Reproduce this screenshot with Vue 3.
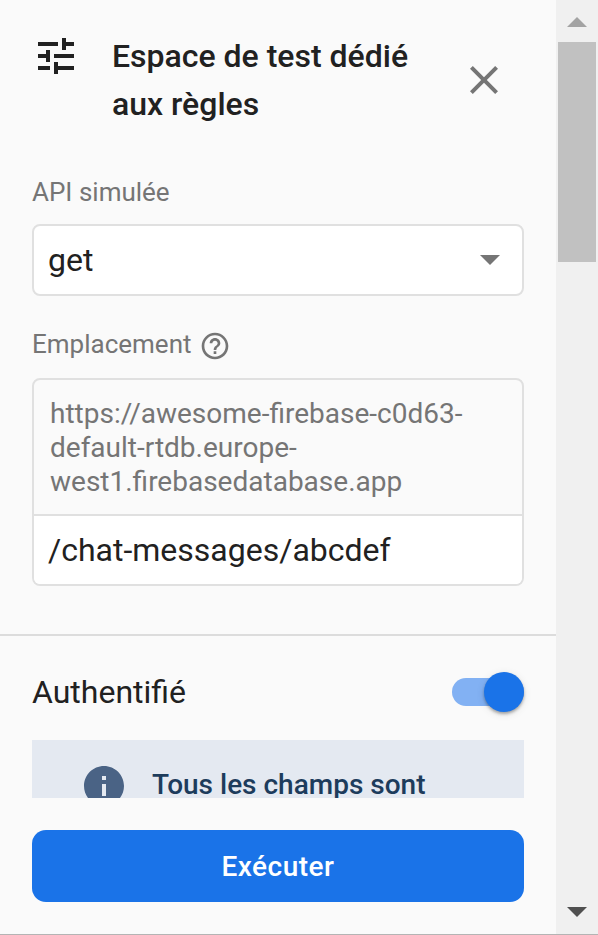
<script setup>
import { ref } from 'vue'

const method = ref('get')
const path = ref('/chat-messages/abcdef')
const authenticated = ref(true)
const databaseUrl = ['https://awesome-firebase-c0d63-', 'default-rtdb.europe-', 'west1.firebasedatabase.app']
</script>

<template>
  <div class="window">
    <main class="panel">
      <div class="content">
        <header class="header">
          <svg class="icon tune" viewBox="0 0 24 24"><path d="M3 17v2h6v-2H3zM3 5v2h10V5H3zm10 16v-2h8v-2h-8v-2h-2v6h2zM7 9v2H3v2h4v2h2V9H7zm14 4v-2H11v2h10zm-6-4h2V7h4V5h-4V3h-2v6z" /></svg>
          <h1 class="title">Espace de test dédié aux règles</h1>
          <button class="close" type="button" aria-label="Fermer">
            <svg class="icon" viewBox="0 0 24 24"><path d="M19 6.41 17.59 5 12 10.59 6.41 5 5 6.41 10.59 12 5 17.59 6.41 19 12 13.41 17.59 19 19 17.59 13.41 12z" /></svg>
          </button>
        </header>

        <div class="label"><span>API simulée</span></div>
        <div class="select">
          <span class="value">{{ method }}</span>
          <svg class="icon arrow" viewBox="0 0 24 24"><path d="M7 10l5 5 5-5z" /></svg>
        </div>

        <div class="label location">
          <span>Emplacement</span>
          <svg class="help" viewBox="0 0 24 24"><path d="M11 18h2v-2h-2v2zm1-16C6.48 2 2 6.48 2 12s4.48 10 10 10 10-4.48 10-10S17.52 2 12 2zm0 18c-4.41 0-8-3.59-8-8s3.59-8 8-8 8 3.59 8 8-3.59 8-8 8zm0-14c-2.21 0-4 1.79-4 4h2c0-1.1.9-2 2-2s2 .9 2 2c0 2-3 1.75-3 5h2c0-2.25 3-2.5 3-5 0-2.21-1.79-4-4-4z" /></svg>
        </div>
        <div class="field">
          <div class="prefix"><div v-for="line in databaseUrl" :key="line">{{ line }}</div></div>
          <div class="path">{{ path }}</div>
        </div>
      </div>

      <div class="auth">
        <div class="auth-row">
          <span class="auth-label">Authentifié</span>
          <button class="toggle" :class="{ on: authenticated }" type="button" @click="authenticated = !authenticated"><span class="thumb"></span></button>
        </div>
        <div class="notice">
          <svg class="icon info" viewBox="0 0 24 24"><path d="M12 2C6.48 2 2 6.48 2 12s4.48 10 10 10 10-4.48 10-10S17.52 2 12 2zm1 15h-2v-6h2v6zm0-8h-2V7h2v2z" /></svg>
          <span class="notice-text">Tous les champs sont</span>
        </div>
      </div>

      <button class="run" type="button">Exécuter</button>
    </main>

    <aside class="scrollbar">
      <svg class="caret up" viewBox="0 0 20 10"><path d="M0 10 10 0l10 10z" /></svg>
      <div class="scroll-thumb"></div>
      <svg class="caret down" viewBox="0 0 20 10"><path d="M0 0h20L10 10z" /></svg>
    </aside>
  </div>
</template>

<style>
body {
  margin: 0;
  background: #fafafa;
}
</style>

<style scoped>
.window {
  box-sizing: border-box;
  display: flex;
  width: 598px;
  height: 935px;
  overflow: hidden;
  border-bottom: 1px solid #b4b4b4;
  background: #fafafa;
  color: #212121;
  font-family: Roboto, sans-serif;
}
button {
  padding: 0;
  border: 0;
  background: none;
  font: inherit;
}
.panel {
  display: flex;
  flex-direction: column;
  width: 556px;
}
.content {
  box-sizing: border-box;
  height: 636px;
  padding: 32px 32px 0;
  border-bottom: 2px solid #dcdcdc;
}
.header {
  display: flex;
  height: 96px;
}
.icon {
  display: block;
  flex: none;
  width: 48px;
  height: 48px;
  fill: currentColor;
}
.title {
  width: 316px;
  margin: 0 0 0 32px;
  font-size: 32px;
  font-weight: 500;
  line-height: 48px;
}
.close {
  align-self: center;
  margin-left: 32px;
  color: #757575;
}
.label {
  display: flex;
  align-items: center;
  height: 40px;
  margin-top: 44px;
  color: #757575;
  font-size: 26px;
  line-height: 40px;
}
.select {
  box-sizing: border-box;
  display: flex;
  align-items: center;
  justify-content: space-between;
  height: 72px;
  margin-top: 12px;
  padding: 0 8px 0 14px;
  border: 2px solid #e0e0e0;
  border-radius: 8px;
  background: #fff;
  font-size: 32px;
}
.arrow {
  margin-bottom: 2px;
  color: #757575;
}
.label.location {
  margin-top: 28px;
}
.help {
  width: 32px;
  height: 32px;
  margin: 4px 0 0 7.5px;
  fill: #757575;
}
.field {
  box-sizing: border-box;
  height: 208px;
  margin-top: 14px;
  overflow: hidden;
  border: 2px solid #e0e0e0;
  border-radius: 8px;
}
.prefix {
  box-sizing: border-box;
  height: 136px;
  padding: 17px 16px 0;
  border-bottom: 2px solid #e0e0e0;
  color: #757575;
  font-size: 28px;
  line-height: 34px;
}
.path {
  height: 68px;
  padding: 0 14px;
  background: #fff;
  font-size: 32px;
  line-height: 68px;
}
.auth {
  height: 162px;
  padding: 0 32px;
  overflow: hidden;
}
.auth-row {
  display: flex;
  align-items: center;
  justify-content: space-between;
  height: 104px;
}
.auth-label {
  margin-top: 8px;
  font-size: 32px;
  line-height: 40px;
}
.toggle {
  display: flex;
  align-items: center;
  width: 72px;
  height: 28px;
  margin-top: 8px;
  border-radius: 14px;
  background: #bdbdbd;
}
.toggle.on {
  justify-content: flex-end;
  background: #82b1f3;
}
.thumb {
  flex: none;
  width: 40px;
  height: 40px;
  border-radius: 50%;
  background: #1a73e8;
  box-shadow: 0 2px 3px rgba(0, 0, 0, 0.3), 0 2px 8px rgba(0, 0, 0, 0.1);
}
.notice {
  display: flex;
  height: 96px;
  padding: 22px 0 0 48px;
  background: #e4e9f1;
  color: #4a6385;
}
.notice-text {
  margin: 3px 0 0 24px;
  color: #1d3c5c;
  font-size: 28px;
  font-weight: 500;
  line-height: 40px;
}
.run {
  height: 72px;
  margin: 32px 32px 0;
  padding-top: 2px;
  border-radius: 14px;
  background: #1a73e8;
  color: #fff;
  font-size: 28px;
  font-weight: 500;
  letter-spacing: 0.5px;
  line-height: 70px;
}
.scrollbar {
  box-sizing: border-box;
  display: flex;
  flex-direction: column;
  align-items: center;
  width: 42px;
  padding: 17px 0;
  background: #f0f0f0;
}
.caret {
  width: 20px;
  height: 10px;
  fill: #a3a3a3;
}
.caret.down {
  margin-top: auto;
  fill: #505050;
}
.scroll-thumb {
  width: 38px;
  height: 220px;
  margin-top: 15px;
  background: #c1c1c1;
}
</style>
